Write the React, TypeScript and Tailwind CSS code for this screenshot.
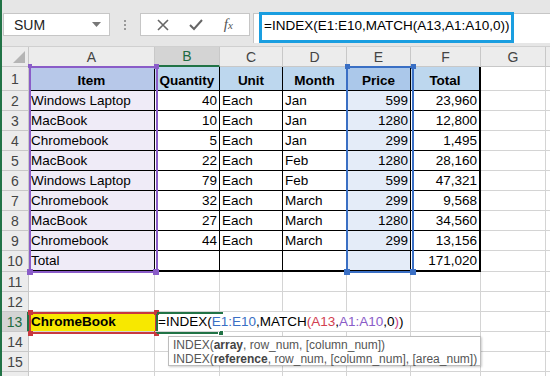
import React from 'react';

const COLS = ['w-[126px]', 'w-[65px]', 'w-[63px]', 'w-[64px]', 'w-[64px]', 'w-[70px]', 'w-[65px]', 'flex-1'];
const LETTERS = ['A', 'B', 'C', 'D', 'E', 'F', 'G', ''];
const ALIGN = ['justify-start', 'justify-end', 'justify-start', 'justify-start', 'justify-end', 'justify-end'];

const DATA = [
  ['Windows Laptop', '40', 'Each', 'Jan', '599', '23,960'],
  ['MacBook', '10', 'Each', 'Jan', '1280', '12,800'],
  ['Chromebook', '5', 'Each', 'Jan', '299', '1,495'],
  ['MacBook', '22', 'Each', 'Feb', '1280', '28,160'],
  ['Windows Laptop', '79', 'Each', 'Feb', '599', '47,321'],
  ['Chromebook', '32', 'Each', 'March', '299', '9,568'],
  ['MacBook', '27', 'Each', 'March', '1280', '34,560'],
  ['Chromebook', '44', 'Each', 'March', '299', '13,156'],
  ['Total', '', '', '', '', '171,020'],
];
const HEAD = ['Item', 'Quantity', 'Unit', 'Month', 'Price', 'Total'];

function RowNum({ n, active }: { n?: number; active?: boolean }) {
  return (
    <div
      className={`h-full w-[27px] shrink-0 flex items-center justify-center border-b border-r border-[#c8c8c8] text-[14px] ${
        active ? 'bg-[#d4d4d4] text-[#1e6b41] border-r-2 border-r-[#217346]' : 'bg-[#ececec] text-[#444]'
      }`}
    >
      {n}
    </div>
  );
}

function TableRow({ n, cells, header }: { n: number; cells: string[]; header?: boolean }) {
  const last = n === 10;
  return (
    <div className={`flex ${header ? 'h-[24px]' : last ? 'h-[21px]' : 'h-[20px]'}`}>
      <RowNum n={n} />
      {cells.map((c, i) => {
        let bg = 'bg-white';
        if (header) bg = i === 0 ? 'bg-[#b7c8e9]' : i === 4 ? 'bg-[#abc8ea]' : 'bg-[#bdd7ee]';
        else if (i === 0) bg = 'bg-[#efebf7]';
        else if (i === 4) bg = 'bg-[#e4ecf8]';
        return (
          <div
            key={i}
            className={`${COLS[i]} h-full shrink-0 flex items-end px-[2px] pb-[1px] border-black ${bg} ${
              header ? 'justify-center font-bold' : ALIGN[i]
            } ${i === 5 ? 'border-r-2' : 'border-r'} ${last ? 'border-b-2' : 'border-b'}`}
          >
            {c}
          </div>
        );
      })}
      <div className={`${COLS[6]} h-full shrink-0 border-r border-b border-[#d4d4d4]`} />
      <div className="flex-1 h-full border-b border-[#d4d4d4]" />
    </div>
  );
}

function EmptyRow({ n }: { n?: number }) {
  return (
    <div className="flex h-[20px]">
      <RowNum n={n} />
      {COLS.map((w, i) => (
        <div key={i} className={`${w} h-full shrink-0 ${i < 7 ? 'border-r' : ''} border-b border-[#d4d4d4]`} />
      ))}
    </div>
  );
}

function Formula() {
  return (
    <>
      =INDEX(<span className="text-[#3a6fc4]">E1:E10</span>,MATCH<span className="text-[#d2404f]">(A13</span>,
      <span className="text-[#8a5cc8]">A1:A10</span>,0<span className="text-[#c8408a]">)</span>)
    </>
  );
}

export default function App() {
  return (
    <div className="relative w-[550px] h-[376px] overflow-hidden bg-white border-l-2 border-[#217346] font-['Liberation_Sans',Arial,sans-serif] text-[13.5px] leading-[16px] text-black">
      {/* formula bar */}
      <div className="h-[47px] bg-[#e6e6e6] flex items-start pt-[13px] pl-[1px] border-b border-[#d0d0d0]">
        <div className="w-[107px] h-[23px] bg-white border border-[#c6c6c6] flex items-center pl-[10px] pr-[8px] text-[14px] text-[#222]">
          <span className="flex-1">SUM</span>
          <svg width="9" height="6" viewBox="0 0 9 6">
            <path d="M0 0 L9 0 L4.5 5 Z" fill="#777" />
          </svg>
        </div>
        <div className="w-[30px] h-[23px] flex flex-col items-center justify-center gap-[2px]">
          <span className="w-[2px] h-[2px] bg-[#999]" />
          <span className="w-[2px] h-[2px] bg-[#999]" />
          <span className="w-[2px] h-[2px] bg-[#999]" />
        </div>
        <div className="w-[110px] h-[23px] bg-white border border-[#c6c6c6] flex items-center justify-around px-[6px]">
          <svg width="12" height="12" viewBox="0 0 12 12">
            <path d="M1 1 L11 11 M11 1 L1 11" stroke="#666" strokeWidth="1.6" />
          </svg>
          <svg width="14" height="12" viewBox="0 0 14 12">
            <path d="M1 6 L5 10 L13 1" stroke="#666" strokeWidth="2" fill="none" />
          </svg>
          <span className="font-['Liberation_Serif',serif] italic text-[15px] text-[#555]">
            f<span className="text-[11px]">x</span>
          </span>
        </div>
        <div className="ml-[3px] flex-1 h-[30px] bg-white border-l border-t border-[#c6c6c6] flex items-start pl-[10px] pt-[4px] text-[13.5px]">
          =INDEX(E1:E10,MATCH(A13,A1:A10,0))
        </div>
      </div>

      {/* column headers */}
      <div className="flex h-[20px]">
        <div className="w-[27px] shrink-0 bg-[#ececec] border-r border-b border-[#c8c8c8] flex items-end justify-end pr-[3px] pb-[3px]">
          <svg width="12" height="12" viewBox="0 0 12 12">
            <path d="M12 0 L12 12 L0 12 Z" fill="#b5b5b5" />
          </svg>
        </div>
        {COLS.map((w, i) => (
          <div
            key={i}
            className={`${w} shrink-0 flex items-center justify-center text-[14px] ${
              i === 1 ? 'bg-[#d4d4d4] text-[#1e6b41] border-b-2 border-b-[#217346]' : 'bg-[#ececec] text-[#444] border-b border-[#c8c8c8]'
            } ${i < 7 ? 'border-r border-r-[#c8c8c8]' : ''}`}
          >
            {LETTERS[i]}
          </div>
        ))}
      </div>

      <TableRow n={1} cells={HEAD} header />
      {DATA.map((r, i) => (
        <TableRow key={i} n={i + 2} cells={r} />
      ))}
      <EmptyRow n={11} />
      <EmptyRow n={12} />
      <div className="flex h-[20px]">
        <RowNum n={13} active />
        <div className="w-[126px] h-full shrink-0 bg-[#f7e800] font-bold flex items-end px-[2px] pb-[1px] border-b border-[#d4d4d4]">
          ChromeBook
        </div>
        <div className="w-[65px] h-full shrink-0 relative z-10 whitespace-nowrap flex items-end pl-[3px] pb-[1px] border-b border-[#d4d4d4]">
          <Formula />
        </div>
        <div className="w-[63px] h-full shrink-0 border-b border-[#d4d4d4]" />
        <div className="w-[64px] h-full shrink-0 border-b border-[#d4d4d4]" />
        <div className="w-[64px] h-full shrink-0 border-r border-b border-[#d4d4d4]" />
        <div className="w-[70px] h-full shrink-0 border-r border-b border-[#d4d4d4]" />
        <div className="w-[65px] h-full shrink-0 border-r border-b border-[#d4d4d4]" />
        <div className="flex-1 h-full border-b border-[#d4d4d4]" />
      </div>
      <EmptyRow n={14} />
      <EmptyRow n={15} />
      <EmptyRow />

      {/* blue highlight around formula */}
      <div className="absolute left-[257px] top-[12px] w-[255px] h-[31px] border-[3px] border-[#1a9ee0]" />

      {/* purple reference A1:A10 */}
      <div className="absolute left-[27px] top-[66px] w-[129px] h-[207px] border-2 border-[#8a5cc8]" />
      <div className="absolute left-[26px] top-[64px] w-[4px] h-[4px] bg-[#8a5cc8]" />
      <div className="absolute left-[152px] top-[64px] w-[5px] h-[5px] bg-[#8a5cc8]" />
      <div className="absolute left-[25px] top-[269px] w-[6px] h-[6px] bg-[#8a5cc8]" />
      <div className="absolute left-[151px] top-[269px] w-[6px] h-[6px] bg-[#8a5cc8]" />

      {/* blue reference E1:E10 */}
      <div className="absolute left-[344px] top-[66px] w-[68px] h-[207px] border-2 border-[#3a6fc4]" />
      <div className="absolute left-[343px] top-[64px] w-[5px] h-[5px] bg-[#3a6fc4]" />
      <div className="absolute left-[409px] top-[64px] w-[5px] h-[5px] bg-[#3a6fc4]" />
      <div className="absolute left-[342px] top-[269px] w-[6px] h-[6px] bg-[#3a6fc4]" />
      <div className="absolute left-[408px] top-[269px] w-[6px] h-[6px] bg-[#3a6fc4]" />

      {/* red reference A13 */}
      <div className="absolute left-[27px] top-[312px] w-[128px] h-[22px] border-2 border-[#c8383f]" />
      <div className="absolute left-[26px] top-[310px] w-[5px] h-[5px] bg-[#c8383f]" />
      <div className="absolute left-[152px] top-[310px] w-[5px] h-[5px] bg-[#c8383f]" />
      <div className="absolute left-[26px] top-[331px] w-[5px] h-[5px] bg-[#c8383f]" />
      <div className="absolute left-[152px] top-[331px] w-[5px] h-[5px] bg-[#c8383f]" />

      {/* active cell B13 */}
      <div className="absolute left-[155px] top-[312px] w-[66px] h-[2px] bg-[#217346]" />
      <div className="absolute left-[154px] top-[314px] w-[2px] h-[19px] bg-[#217346]" />
      <div className="absolute left-[155px] top-[332px] w-[66px] h-[2px] bg-[#217346]" />
      <div className="absolute left-[216px] top-[330px] w-[6px] h-[6px] bg-[#217346] border border-white" />

      {/* tooltip */}
      <div className="absolute left-[166px] top-[336px] w-[313px] h-[30px] bg-white border border-[#bdbdbd] shadow-[1px_1px_2px_rgba(0,0,0,0.2)] px-[4px] pt-px whitespace-nowrap text-[12px] leading-[14px] text-[#555] z-20">
        <div>
          INDEX(<b className="text-[#444]">array</b>, row_num, [column_num])
        </div>
        <div>
          INDEX(<b className="text-[#444]">reference</b>, row_num, [column_num], [area_num])
        </div>
      </div>
    </div>
  );
}
